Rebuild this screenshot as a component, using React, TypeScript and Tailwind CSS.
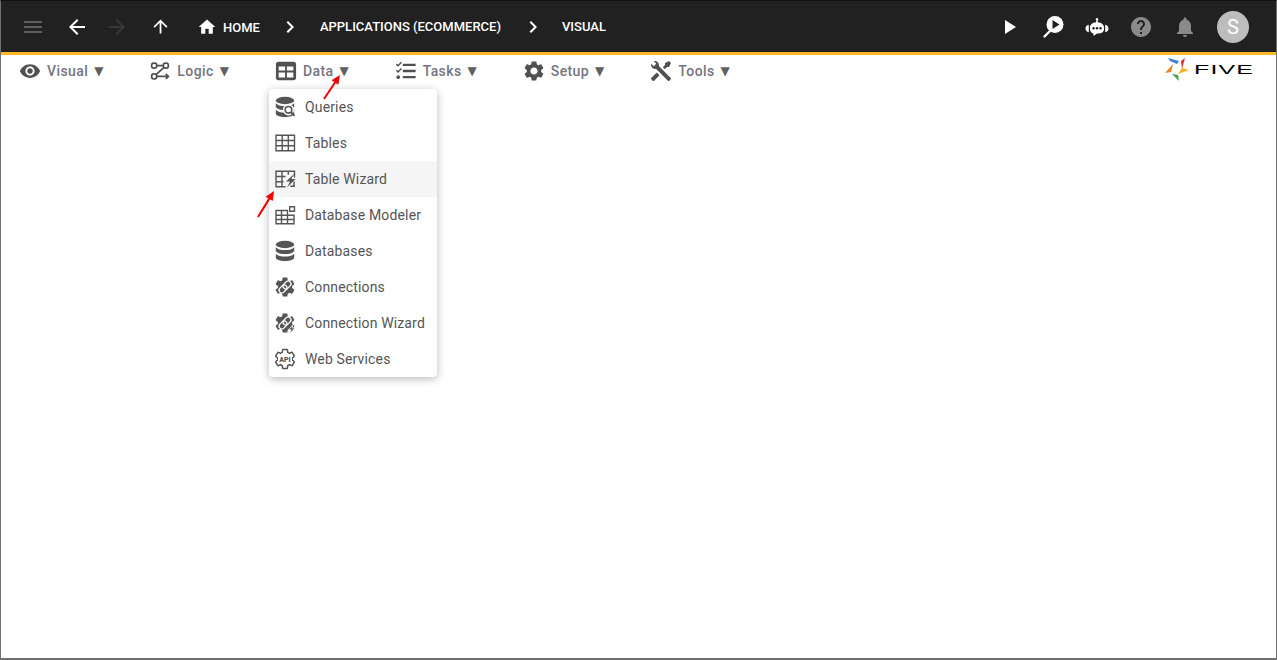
import type { ReactNode } from 'react';

const GEAR =
  'M19.14 12.94c.04-.3.06-.61.06-.94 0-.32-.02-.64-.07-.94l2.03-1.58c.18-.14.23-.41.12-.61l-1.92-3.32c-.12-.22-.37-.29-.59-.22l-2.39.96c-.5-.38-1.03-.7-1.62-.94l-.36-2.54c-.04-.24-.24-.41-.48-.41h-3.84c-.24 0-.43.17-.47.41l-.36 2.54c-.59.24-1.13.57-1.62.94l-2.39-.96c-.22-.08-.47 0-.59.22L2.74 8.87c-.12.21-.08.47.12.61l2.03 1.58c-.05.3-.09.63-.09.94s.02.64.07.94l-2.03 1.58c-.18.14-.23.41-.12.61l1.92 3.32c.12.22.37.29.59.22l2.39-.96c.5.38 1.03.7 1.62.94l.36 2.54c.05.24.24.41.48.41h3.84c.24 0 .44-.17.47-.41l.36-2.54c.59-.24 1.13-.56 1.62-.94l2.39.96c.22.08.47 0 .59-.22l1.92-3.32c.12-.22.07-.47-.12-.61l-2.01-1.58z';

const DB =
  'M2.800 8.200c1.700 2 5 2.900 9.200 2.900s7.500-.900 9.200-2.900v4c-1.700 2-5 2.900-9.200 2.900s-7.500-.900-9.200-2.900zM2.800 14.700c1.700 2 5 2.900 9.200 2.900s7.500-.900 9.200-2.900v3.800c0 2-4.100 3.500-9.200 3.500s-9.200-1.500-9.200-3.500z';

function Svg({ children, className }: { children: ReactNode; className: string }) {
  return (
    <svg viewBox="0 0 24 24" fill="currentColor" className={`shrink-0 ${className}`}>
      {children}
    </svg>
  );
}

function LinkMark() {
  return (
    <g transform="rotate(-45 12 12)" fill="none" stroke="white" strokeWidth="1.3">
      <rect x="4.800" y="9.200" width="8.800" height="5.600" rx="2.800" />
      <rect x="10.400" y="9.200" width="8.800" height="5.600" rx="2.800" />
    </g>
  );
}

function Grid({ lines }: { lines: string }) {
  return <path d={lines} fill="none" stroke="currentColor" strokeWidth="1.4" />;
}

const navIcons: Record<string, ReactNode> = {
  eye: (
    <path d="M12 4.5C7 4.5 2.73 7.61 1 12c1.73 4.39 6 7.5 11 7.5s9.27-3.11 11-7.5c-1.73-4.39-6-7.5-11-7.5zM12 17c-2.76 0-5-2.24-5-5s2.24-5 5-5 5 2.24 5 5-2.24 5-5 5zm0-8c-1.66 0-3 1.34-3 3s1.34 3 3 3 3-1.34 3-3-1.34-3-3-3z" />
  ),
  logic: (
    <g fill="none" stroke="currentColor" strokeWidth="2.1">
      <rect x="2" y="2.500" width="6" height="6" rx="2.500" />
      <rect x="2" y="15.500" width="6" height="6" rx="2.500" />
      <rect x="16" y="2.500" width="6" height="6" rx="2.500" />
      <path d="M8 5.500h8M16.500 8L7.500 16M8 18.500h14M19 15.500l3 3-3 3" />
    </g>
  ),
  data: (
    <path
      fillRule="evenodd"
      d="M4 2h16a3 3 0 0 1 3 3v14a3 3 0 0 1-3 3H4a3 3 0 0 1-3-3V5a3 3 0 0 1 3-3zM4 7v4.500h7V7zM13 7v4.500h7V7zM4 13.500V19h7v-5.500zM13 13.500V19h7v-5.500z"
    />
  ),
  tasks: (
    <>
      <path d="M8.500 4h14v2.600h-14zM8.500 10.700h14v2.600h-14zM8.500 17.400h14V20h-14z" />
      <path d="M1.500 4.500l1.800 1.800L7 2.500M1.500 11.200l1.800 1.800L7 9.200" fill="none" stroke="currentColor" strokeWidth="1.600" />
      <circle cx="3.500" cy="18.700" r="2" />
    </>
  ),
  setup: <path fillRule="evenodd" d={GEAR + 'M12 15.600c-1.980 0-3.600-1.620-3.600-3.600s1.620-3.600 3.600-3.600 3.600 1.620 3.600 3.600-1.620 3.600-3.600 3.600z'} />,
  tools: (
    <path d="M21.710 20.290L20.290 21.710A1 1 0 0 1 18.880 21.710L7 9.850A3.810 3.810 0 0 1 6 10A4 4 0 0 1 2.220 4.700L4.760 7.240L5.290 6.710L6.710 5.290L7.240 4.760L4.700 2.220A4 4 0 0 1 10 6A3.810 3.810 0 0 1 9.850 7L21.710 18.880A1 1 0 0 1 21.710 20.290M2.290 18.880A1 1 0 0 0 2.290 20.290L3.710 21.710A1 1 0 0 0 5.120 21.710L10.590 16.250L7.760 13.420M20 2L16 4V6L13.830 8.170L15.830 10.170L18 8H20L22 4Z" />
  ),
};

const menuIcons: Record<string, ReactNode> = {
  queries: (
    <>
      <ellipse cx="12" cy="5.500" rx="9.200" ry="3.700" />
      <path d={DB} />
      <circle cx="15.500" cy="14.800" r="5.600" fill="white" />
      <circle cx="15.500" cy="14.800" r="3.300" fill="none" stroke="currentColor" strokeWidth="1.600" />
      <path d="M18 17.300l3.500 3.500" stroke="currentColor" strokeWidth="2" />
    </>
  ),
  tables: <Grid lines="M3 4.300h18.500v15.500H3zM3 9.500h18.500M3 14.700h18.500M9.200 4.300v15.500M15.300 4.300v15.500" />,
  tableWizard: (
    <>
      <Grid lines="M12.500 19.800H3V4.300h18.500v6.200M3 9.500h9.500M3 14.700h7.500M9 4.300v15.500M15.300 4.300v3.500" />
      <path d="M21.500 6.500l-8.500 8h4l-3 6 8.500-8.500h-4.200z" />
      <path d="M21.800 14.500v5.500h-4.500v-1.500h3v-4z" />
    </>
  ),
  modeler: (
    <>
      <Grid lines="M15 7.500H3v13.300h18v-9.300M3 12.200h18M3 16.500h18M8.500 7.500v13.300M14.500 7.500v13.300" />
      <path fillRule="evenodd" d="M16 3h6.200v6h-6.200zM17.400 4.400v3.200h3.400V4.400z" />
    </>
  ),
  databases: (
    <>
      <ellipse cx="12" cy="5.500" rx="9.200" ry="3.700" />
      <path d={DB} />
    </>
  ),
  connections: (
    <>
      <path d={GEAR} />
      <LinkMark />
    </>
  ),
  connectionWizard: (
    <>
      <path d={GEAR} />
      <LinkMark />
      <path d="M20 13.500l-4.500 5.300h2.700l-1.500 4.200 5.300-6h-3z" stroke="white" strokeWidth="0.700" />
    </>
  ),
  webServices: (
    <>
      <path d={GEAR} fill="none" stroke="currentColor" strokeWidth="1.500" />
      <rect x="5" y="9" width="14" height="6" fill="white" />
      <text x="12" y="14.600" textAnchor="middle" fontSize="7" fontWeight="900" fontFamily="Roboto, sans-serif" fill="currentColor">
        API
      </text>
    </>
  ),
};

const navItems = [
  { label: 'Visual', icon: 'eye', size: 'w-[22px] h-[22px]' },
  { label: 'Logic', icon: 'logic', size: 'w-[20px] h-[20px]' },
  { label: 'Data', icon: 'data', size: 'w-[22px] h-[22px]' },
  { label: 'Tasks', icon: 'tasks', size: 'w-[22px] h-[22px]' },
  { label: 'Setup', icon: 'setup', size: 'w-6 h-6' },
  { label: 'Tools', icon: 'tools', size: 'w-6 h-6' },
];

const menuItems = [
  { label: 'Queries', icon: 'queries' },
  { label: 'Tables', icon: 'tables' },
  { label: 'Table Wizard', icon: 'tableWizard', active: true },
  { label: 'Database Modeler', icon: 'modeler' },
  { label: 'Databases', icon: 'databases' },
  { label: 'Connections', icon: 'connections' },
  { label: 'Connection Wizard', icon: 'connectionWizard' },
  { label: 'Web Services', icon: 'webServices' },
];

function Chevron() {
  return (
    <Svg className="w-6 h-6 text-white">
      <path d="M10 6L8.590 7.410 13.170 12l-4.580 4.590L10 18l6-6z" />
    </Svg>
  );
}

function Crumb({ children }: { children: ReactNode }) {
  return <span className="text-[13px] font-medium text-white uppercase">{children}</span>;
}

function Header() {
  return (
    <header className="flex items-center h-[54px] bg-[#212121] border-b-[3px] border-[#fcb827] pl-[12px] pr-[16px] shrink-0">
      <div className="w-10 flex justify-center">
        <Svg className="w-6 h-6 text-[#5e5e5e]">
          <path d="M3 18h18v-2H3v2zm0-5h18v-2H3v2zm0-7v2h18V6H3z" />
        </Svg>
      </div>
      <div className="w-10 ml-1 flex justify-center">
        <Svg className="w-6 h-6 text-white">
          <path d="M20 11H7.830l5.590-5.590L12 4l-8 8 8 8 1.410-1.410L7.830 13H20v-2z" />
        </Svg>
      </div>
      <div className="w-10 flex justify-center">
        <Svg className="w-6 h-6 text-[#383838]">
          <path d="M12 4l-1.410 1.410L16.170 11H4v2h12.170l-5.580 5.590L12 20l8-8z" />
        </Svg>
      </div>
      <div className="w-10 ml-[3px] flex justify-center">
        <Svg className="w-[21px] h-[21px] text-white">
          <path d="M4 12l1.410 1.410L11 7.830V20h2V7.830l5.580 5.590L20 12l-8-8-8 8z" />
        </Svg>
      </div>
      <Svg className="w-5 h-5 ml-[17px] text-white">
        <path d="M10 20v-6h4v6h5v-8h3L12 3 2 12h3v8z" />
      </Svg>
      <div className="ml-[6px]">
        <Crumb>Home</Crumb>
      </div>
      <div className="ml-[18px] mr-[18px]">
        <Chevron />
      </div>
      <Crumb>Applications (eCommerce)</Crumb>
      <div className="ml-[20px] mr-[17px]">
        <Chevron />
      </div>
      <Crumb>Visual</Crumb>

      <div className="ml-auto flex items-center">
        <div className="w-11 flex justify-center">
          <Svg className="w-6 h-6 text-white">
            <path d="M8 5v14l11-7z" />
          </Svg>
        </div>
        <div className="w-11 flex justify-center">
          <Svg className="w-6 h-6 text-white">
            <circle cx="14" cy="9.500" r="8.500" />
            <path d="M11.500 5v9l7-4.500z" fill="#212121" />
            <path d="M3.500 21.500l5.500-5.500" stroke="currentColor" strokeWidth="2.400" strokeLinecap="round" />
          </Svg>
        </div>
        <div className="w-11 flex justify-center">
          <Svg className="w-6 h-6 text-white">
            <path d="M12 3a1.300 1.300 0 0 1 .800 2.300v1.900c3.800.300 6.200 2.400 6.200 5.200v1.800c0 2.700-2.700 4.300-6 4.300h-1l-3.500 2.500V18.700C6.300 18 5 16.500 5 14.200v-1.800c0-2.800 2.400-4.900 6.200-5.200V5.300A1.300 1.300 0 0 1 12 3z" />
            <path d="M3.800 9.700v7.600C1.700 17 .500 15.300.500 13.500s1.200-3.500 3.300-3.800zM20.200 9.700v7.600c2.100-.300 3.300-2 3.300-3.800s-1.200-3.500-3.300-3.800z" />
            <circle cx="8.500" cy="13.300" r="1.200" fill="#212121" />
            <circle cx="12" cy="13.300" r="1.200" fill="#212121" />
            <circle cx="15.500" cy="13.300" r="1.200" fill="#212121" />
          </Svg>
        </div>
        <div className="w-11 flex justify-center">
          <Svg className="w-6 h-6 text-[#8a8a8a]">
            <path d="M12 2C6.480 2 2 6.480 2 12s4.480 10 10 10 10-4.480 10-10S17.520 2 12 2zm1 17h-2v-2h2v2zm2.070-7.750l-.900.920C13.450 12.900 13 13.500 13 15h-2v-.500c0-1.100.450-2.100 1.170-2.830l1.240-1.260c.370-.360.590-.860.590-1.410 0-1.100-.900-2-2-2s-2 .900-2 2H8c0-2.210 1.790-4 4-4s4 1.790 4 4c0 .880-.360 1.680-.930 2.250z" />
          </Svg>
        </div>
        <div className="w-11 flex justify-center">
          <Svg className="w-6 h-6 text-[#8a8a8a]">
            <path d="M12 22c1.100 0 2-.900 2-2h-4c0 1.100.890 2 2 2zm6-6v-5c0-3.070-1.640-5.640-4.500-6.320V4c0-.830-.670-1.500-1.500-1.500s-1.500.670-1.500 1.500v.680C7.630 5.360 6 7.920 6 11v5l-2 2v1h16v-1l-2-2z" />
          </Svg>
        </div>
        <div className="ml-[10px] mr-[11px] w-8 h-8 rounded-full bg-[#bdbdbd] flex items-center justify-center text-white text-[20px] leading-none">
          S
        </div>
      </div>
    </header>
  );
}

function Nav() {
  return (
    <nav className="flex items-start pt-[6px] pl-[19px] gap-[47px]">
      {navItems.map((item) => (
        <div key={item.label} className="flex items-center h-5">
          <div className="w-5 h-5 flex items-center justify-center text-[#505050]">
            <Svg className={item.size}>{navIcons[item.icon]}</Svg>
          </div>
          <span className="ml-[7px] text-[14px] font-medium tracking-[0.4px] text-[#75757f]">{item.label}</span>
          <span className="ml-[6px] text-[12px] leading-none text-[#606060] font-['DejaVu_Sans',sans-serif]">▼</span>
        </div>
      ))}
    </nav>
  );
}

function DataMenu() {
  return (
    <div className="absolute left-[268px] top-[88px] w-[168px] bg-white rounded shadow-[0_2px_8px_rgba(0,0,0,0.28)] overflow-hidden">
      {menuItems.map((item) => (
        <div key={item.label} className={`flex items-center h-9 pl-1 ${item.active ? 'bg-[#f5f5f5]' : ''}`}>
          <Svg className="w-6 h-6 text-[#555555]">{menuIcons[item.icon]}</Svg>
          <span className="ml-2 text-[14px] tracking-[0.15px] text-[#555555]">{item.label}</span>
        </div>
      ))}
    </div>
  );
}

function Arrow({ x1, y1, x2, y2 }: { x1: number; y1: number; x2: number; y2: number }) {
  const angle = Math.atan2(y2 - y1, x2 - x1);
  const len = 10;
  const spread = 0.42;
  const a = `${x2 - len * Math.cos(angle - spread)},${y2 - len * Math.sin(angle - spread)}`;
  const b = `${x2 - len * Math.cos(angle + spread)},${y2 - len * Math.sin(angle + spread)}`;
  return (
    <>
      <line x1={x1} y1={y1} x2={x2 - 6 * Math.cos(angle)} y2={y2 - 6 * Math.sin(angle)} stroke="#f00000" strokeWidth="2" />
      <polygon points={`${x2},${y2} ${a} ${b}`} fill="#f00000" />
    </>
  );
}

function Logo() {
  return (
    <div className="absolute left-[1163px] top-[55px] flex items-center">
      <svg viewBox="0 0 26 26" className="w-[26px] h-[26px]">
        <polygon points="4,2 15,5 13,8 6,5" fill="#3f7fd0" />
        <polygon points="17,5 21,2 18,13" fill="#e0312f" />
        <polygon points="25,14 14,18 18,12" fill="#f5b21e" />
        <polygon points="8,18 14,19 15,25" fill="#3fa34d" />
        <polygon points="1,17 9,8 7,16" fill="#f58025" />
      </svg>
      <span className="ml-[4px] w-[58px] text-[13px] leading-none text-black tracking-[0.6px] origin-left scale-x-[1.92] font-['Liberation_Sans',sans-serif]">
        FIVE
      </span>
    </div>
  );
}

export default function App() {
  return (
    <div className="relative flex flex-col w-full h-screen overflow-hidden bg-white border border-b-2 border-[#707070] border-t-[#111111] font-['Roboto',sans-serif]">
      <Header />
      <Nav />
      <Logo />
      <DataMenu />
      <svg className="absolute left-0 top-0 w-full h-full pointer-events-none">
        <Arrow x1={323} y1={98} x2={339} y2={74} />
        <Arrow x1={257} y1={216} x2={273} y2={190} />
      </svg>
    </div>
  );
}
